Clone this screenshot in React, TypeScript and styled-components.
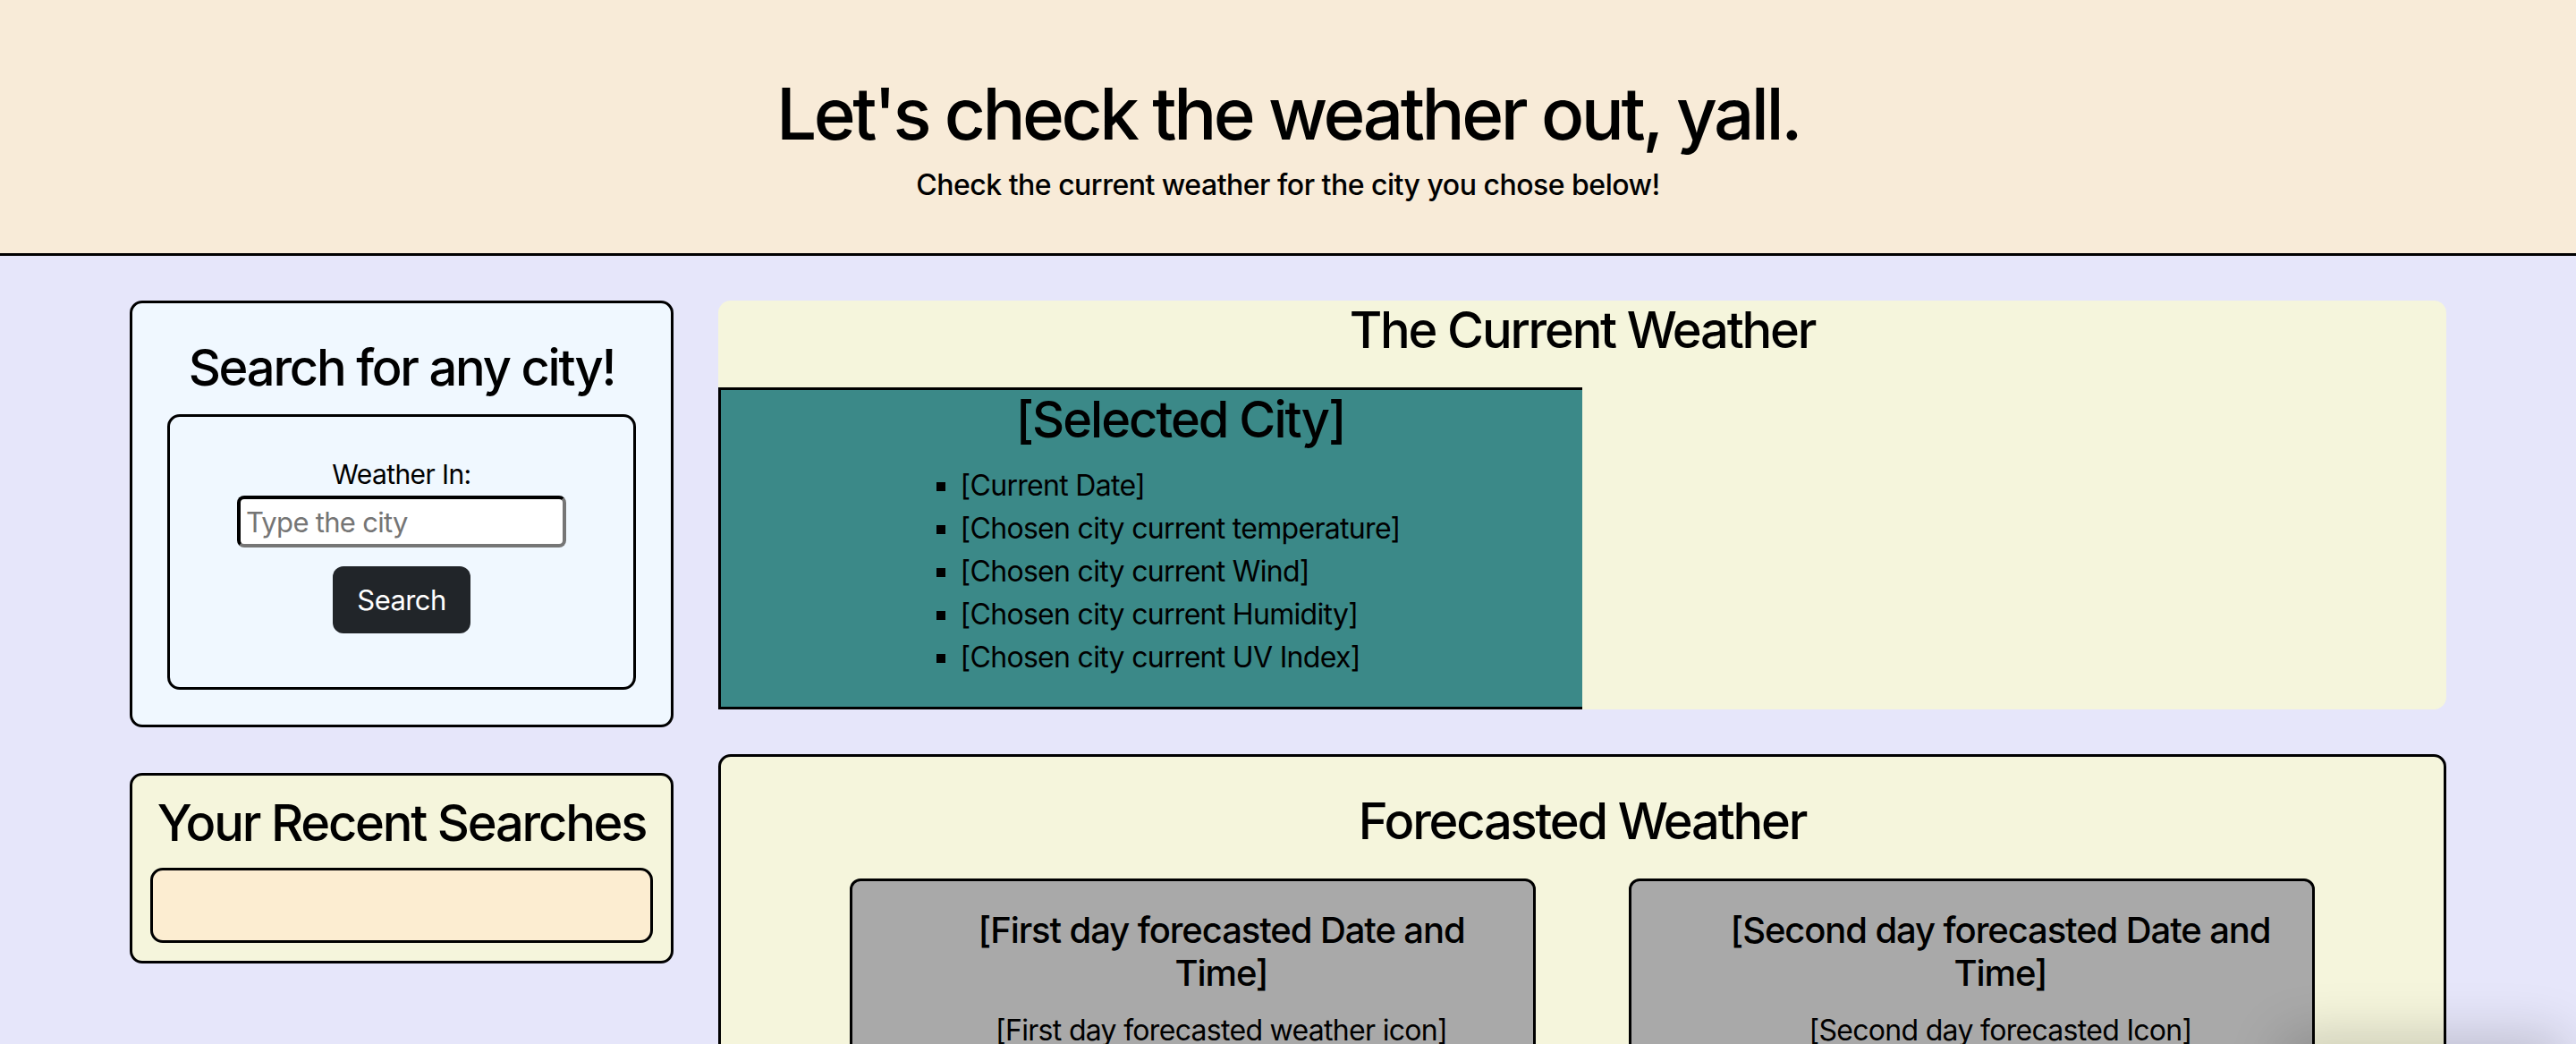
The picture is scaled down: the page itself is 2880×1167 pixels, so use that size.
import styled, { createGlobalStyle } from 'styled-components';

const GlobalStyle = createGlobalStyle`
  * {
    box-sizing: border-box;
  }
  body {
    margin: 0;
    background-color: #e6e6fa;
    font-family: Inter, "Liberation Sans", sans-serif;
    color: #000;
    letter-spacing: -0.7px;
  }
`;

const Header = styled.header`
  background-color: #f8ebd8;
  border-bottom: 3px solid #000;
  height: 286px;
  padding-top: 79px;
  text-align: center;
`;

const Title = styled.h1`
  margin: 0 0 8px;
  font-size: 80px;
  line-height: 96px;
  font-weight: 500;
  letter-spacing: -3.5px;
`;

const Subtitle = styled.p`
  margin: 0;
  font-size: 32px;
  line-height: 48px;
  font-weight: 500;
  letter-spacing: -0.5px;
`;

const Main = styled.main`
  display: grid;
  grid-template-columns: 608px 1932px;
  justify-content: center;
  column-gap: 50px;
  padding-top: 50px;
`;

const Column = styled.div<{ $gap: number }>`
  display: flex;
  flex-direction: column;
  gap: ${(p) => p.$gap}px;
`;

const SideCard = styled.section<{ $bg: string; $pad: number }>`
  background-color: ${(p) => p.$bg};
  border: 3px solid #000;
  border-radius: 14px;
  padding: ${(p) => p.$pad}px;
  text-align: center;
`;

const SectionTitle = styled.h2<{ $mb?: number }>`
  margin: 0 0 ${(p) => p.$mb ?? 16}px;
  font-size: 56px;
  line-height: 67px;
  font-weight: 500;
  letter-spacing: -2.2px;
  white-space: nowrap;
`;

const FormBox = styled.form`
  border: 3px solid #000;
  border-radius: 14px;
  padding: 40px 0 60px;
  display: flex;
  flex-direction: column;
  align-items: center;
`;

const Label = styled.label`
  font-size: 30px;
  line-height: 48px;
  letter-spacing: -0.6px;
`;

const CityInput = styled.input`
  width: 368px;
  height: 58px;
  font-family: inherit;
  font-size: 31px;
  letter-spacing: -0.7px;
  padding: 0 6px;
  border: 4px inset #767676;
  border-top-color: #1f1f1f;
  border-left-color: #1f1f1f;
  border-radius: 8px;
  background: #fff;

  &::placeholder {
    color: #757575;
  }
`;

const SearchButton = styled.button`
  margin-top: 21px;
  width: 154px;
  height: 75px;
  font-family: inherit;
  font-size: 31px;
  letter-spacing: -0.6px;
  color: #fff;
  background-color: #212529;
  border: none;
  border-radius: 12px;
`;

const RecentBox = styled.div`
  height: 84px;
  background-color: #fcedd1;
  border: 3px solid #000;
  border-radius: 14px;
`;

const CurrentCard = styled.section`
  background-color: #f5f5dc;
  border-radius: 14px;
  height: 457px;
  text-align: center;
`;

const CurrentTitle = styled(SectionTitle)`
  margin-bottom: 30px;
`;

const CityPanel = styled.div`
  width: 50%;
  height: 360px;
  background-color: #3b8988;
  border: 3px solid #000;
  border-right: none;
  padding-left: 64px;
  display: flex;
  flex-direction: column;
  align-items: center;
`;

const CityName = styled.h3`
  margin: 0 0 16px;
  font-size: 56px;
  line-height: 67px;
  font-weight: 500;
  letter-spacing: -2px;
`;

const StatList = styled.ul`
  margin: 0;
  padding: 0;
  list-style: square;
  text-align: left;
`;

const StatItem = styled.li`
  font-size: 32px;
  line-height: 48px;
`;

const ForecastCard = styled.section`
  background-color: #f5f5dc;
  border: 3px solid #000;
  border-radius: 14px;
  padding-top: 39px;
  text-align: center;
`;

const ForecastGrid = styled.div`
  display: flex;
  flex-wrap: wrap;
  justify-content: center;
  gap: 40px 104px;
  margin-top: 30px;
  padding-bottom: 40px;
`;

const DayCard = styled.article`
  width: 767px;
  background-color: #a9a9a9;
  border: 3px solid #000;
  border-radius: 12px;
  padding: 31px 32px 30px 96px;
`;

const DayTitle = styled.h5`
  margin: 0 0 16px;
  font-size: 40px;
  line-height: 48px;
  font-weight: 500;
  letter-spacing: -1.1px;
`;

const DayLine = styled.p`
  margin: 0;
  font-size: 32px;
  line-height: 48px;
`;

const ShadowPeek = styled.div`
  position: fixed;
  right: 20px;
  bottom: -70px;
  width: 300px;
  height: 70px;
  background: #f2f2f2;
  border-radius: 12px;
  box-shadow: 0 0 60px 10px rgba(0, 0, 0, 0.18);
`;

const stats = [
  '[Current Date]',
  '[Chosen city current temperature]',
  '[Chosen city current Wind]',
  '[Chosen city current Humidity]',
  '[Chosen city current UV Index]',
];

const days = [
  { title: '[First day forecasted Date and Time]', icon: '[First day forecasted weather icon]', n: 'First' },
  { title: '[Second day forecasted Date and Time]', icon: '[Second day forecasted Icon]', n: 'Second' },
  { title: '[Third day forecasted Date and Time]', icon: '[Third day forecasted Icon]', n: 'Third' },
  { title: '[Fourth day forecasted Date and Time]', icon: '[Fourth day forecasted Icon]', n: 'Fourth' },
  { title: '[Fifth day forecasted Date and Time]', icon: '[Fifth day forecasted Icon]', n: 'Fifth' },
];

export default function App() {
  return (
    <>
      <GlobalStyle />
      <Header>
        <Title>Let's check the weather out, yall.</Title>
        <Subtitle>Check the current weather for the city you chose below!</Subtitle>
      </Header>
      <Main>
        <Column $gap={51}>
          <SideCard $bg="#f0f8ff" $pad={39}>
            <SectionTitle $mb={18}>Search for any city!</SectionTitle>
            <FormBox onSubmit={(e) => e.preventDefault()}>
              <Label htmlFor="city">Weather In:</Label>
              <CityInput id="city" placeholder="Type the city" />
              <SearchButton type="submit">Search</SearchButton>
            </FormBox>
          </SideCard>
          <SideCard $bg="#f5f5dc" $pad={20}>
            <SectionTitle>Your Recent Searches</SectionTitle>
            <RecentBox />
          </SideCard>
        </Column>
        <Column $gap={50}>
          <CurrentCard>
            <CurrentTitle>The Current Weather</CurrentTitle>
            <CityPanel>
              <CityName>[Selected City]</CityName>
              <StatList>
                {stats.map((s) => (
                  <StatItem key={s}>{s}</StatItem>
                ))}
              </StatList>
            </CityPanel>
          </CurrentCard>
          <ForecastCard>
            <SectionTitle $mb={0}>Forecasted Weather</SectionTitle>
            <ForecastGrid>
              {days.map((d) => (
                <DayCard key={d.n}>
                  <DayTitle>{d.title}</DayTitle>
                  <DayLine>{d.icon}</DayLine>
                  <DayLine>[{d.n} day forecasted temperature]</DayLine>
                  <DayLine>[{d.n} day forecasted Wind]</DayLine>
                  <DayLine>[{d.n} day forecasted Humidity]</DayLine>
                </DayCard>
              ))}
            </ForecastGrid>
          </ForecastCard>
        </Column>
      </Main>
      <ShadowPeek />
    </>
  );
}
